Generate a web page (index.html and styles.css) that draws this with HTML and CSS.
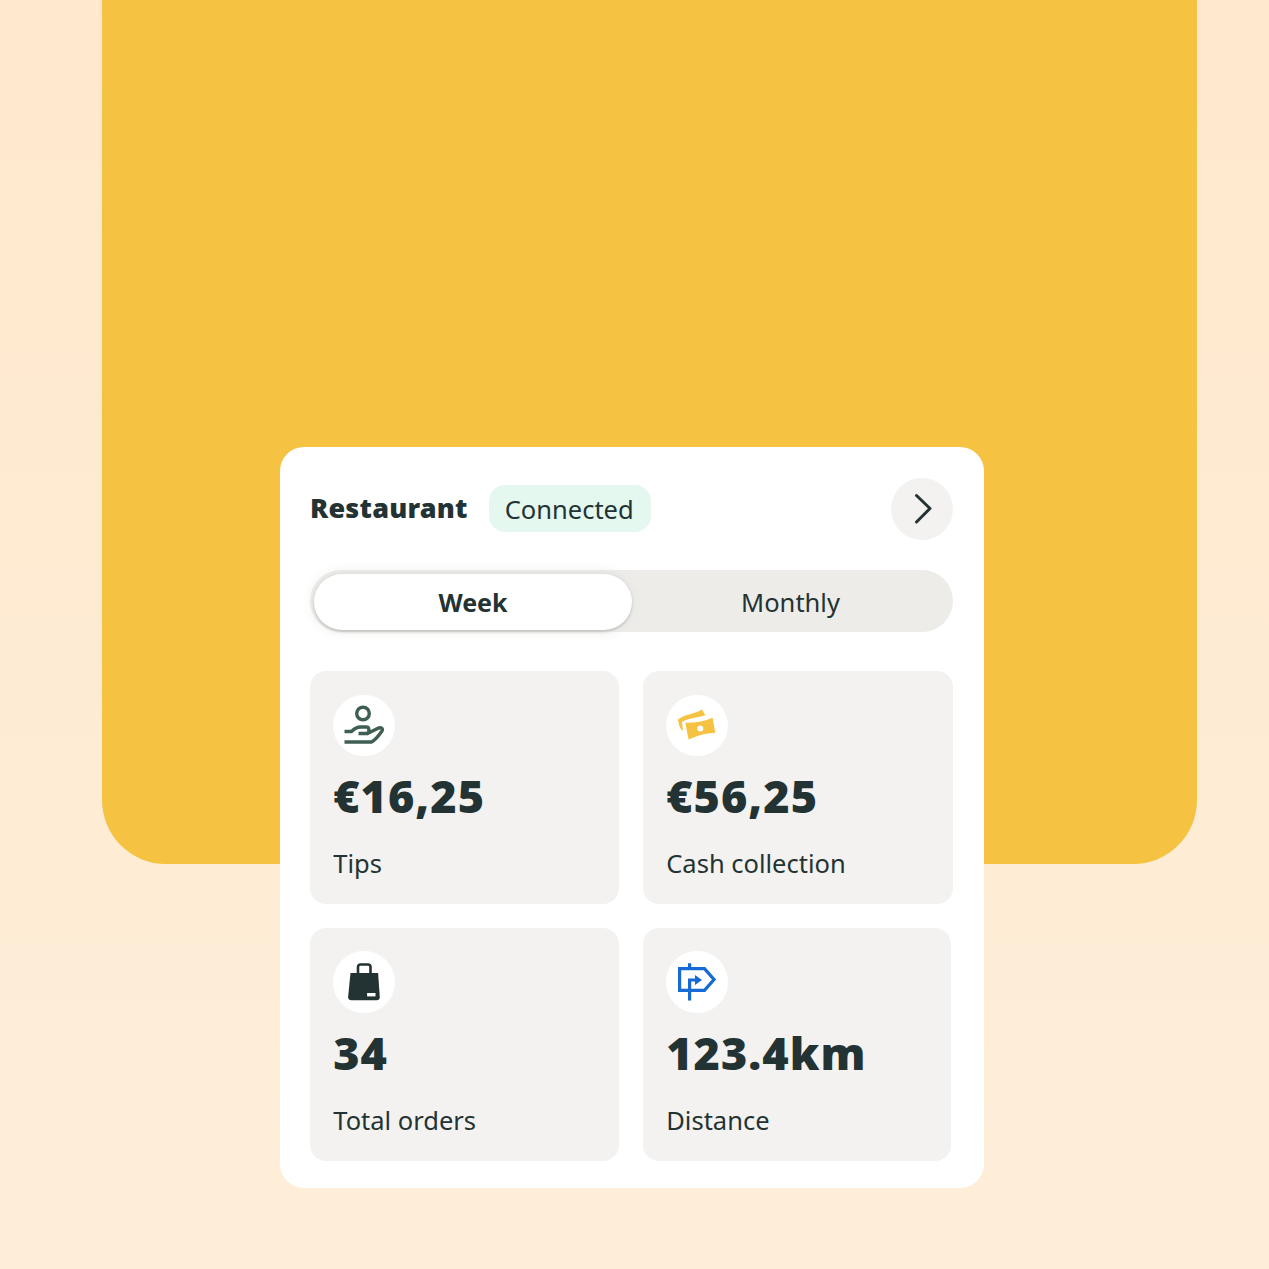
FILE: index.html
```html
<!DOCTYPE html>
<html>

<head>
    <title>Restaurant</title>
    <meta charset="UTF-8">
    <meta name="viewport" content="width=device-width, initial-scale=1.0">
    <link rel="stylesheet" href="styles.css">
</head>

<body>
    <div class="backdrop"></div>

    <div class="card">
        <div class="card-header">
            <h2>Restaurant</h2>
            <span class="badge">Connected</span>
            <div class="next-button">
                <svg width="24" height="32" viewBox="0 0 24 32">
                    <path d="M6.5 2.5L20 15.5L6.5 29" fill="none" stroke="#233333" stroke-width="3" stroke-linecap="round" stroke-linejoin="round" />
                </svg>
            </div>
        </div>

        <div class="toggle">
            <div class="toggle-option active">Week</div>
            <div class="toggle-option inactive">Monthly</div>
        </div>

        <div class="stats">
            <div class="stat">
                <div class="stat-icon">
                    <svg width="44" height="44" viewBox="0 0 44 44">
                        <circle cx="21" cy="10.5" r="6.3" fill="none" stroke="#3f5f52" stroke-width="3.4" />
                        <path d="M2.5 28.5H9.5C12.5 25.5 15.500 24 18.500 24H24.500C27.500 24 28 30 24.500 30.500H16.500M24.500 31L35.500 25.500C38.500 24 41.500 25 40 28C36.500 33 33.500 37 29.500 39H2.500" fill="none" stroke="#3f5f52" stroke-width="3.4" />
                    </svg>
                </div>
                <div class="stat-value">€16,25</div>
                <div class="stat-label">Tips</div>
            </div>
            <div class="stat">
                <div class="stat-icon">
                    <svg width="44" height="44" viewBox="0 0 44 44">
                        <path d="M3 16.5C10 11 20 11 27 6.5L30.3 12.2C22 15 14 14.5 7 19L8 28C5 26 3.5 22 3 16.5Z" fill="#f5c242" />
                        <path d="M10.3 19.8C19 20 28 19 37.6 14.8L40.3 29.8C31 30 22 33 13.6 36.5Z" fill="#f5c242" />
                        <circle cx="25.3" cy="25.5" r="3" fill="#fff" />
                    </svg>
                </div>
                <div class="stat-value">€56,25</div>
                <div class="stat-label">Cash collection</div>
            </div>
            <div class="stat">
                <div class="stat-icon">
                    <svg width="44" height="44" viewBox="0 0 44 44">
                        <path d="M16 14V7C16 5.500 17 4.500 18.500 4.500H26C27.500 4.500 28.500 5.500 28.500 7V14" fill="none" stroke="#233333" stroke-width="2.6" />
                        <path d="M8.500 13H36.100L37.800 37C37.800 39 36.800 40.300 34.500 40.300H9.500C7.200 40.300 6.100 39 6.100 37Z" fill="#233333" />
                        <rect x="25.100" y="33" width="8.400" height="3.400" fill="#fff" />
                    </svg>
                </div>
                <div class="stat-value">34</div>
                <div class="stat-label">Total orders</div>
            </div>
            <div class="stat stat-narrow">
                <div class="stat-icon">
                    <svg width="44" height="44" viewBox="0 0 44 44">
                        <path d="M4.600 8.600H29.500L39 19.500L29.500 30.400H4.600Z" fill="none" stroke="#1769d6" stroke-width="3.200" />
                        <path d="M14.600 3.300V8.600M14.600 40.500V20H21" fill="none" stroke="#1769d6" stroke-width="3.200" />
                        <path d="M20 15L27 20L20 25Z" fill="#1769d6" />
                    </svg>
                </div>
                <div class="stat-value">123.4km</div>
                <div class="stat-label">Distance</div>
            </div>
        </div>
    </div>
</body>

</html>
```

FILE: styles.css
```css
body {
    margin: 0;
    height: 1269px;
    overflow: hidden;
    font-family: "Noto Sans", Arial, sans-serif;
    color: #233333;
    background: linear-gradient(#ffe8cd, #feeed9);
}

.backdrop {
    height: 864px;
    width: 1095px;
    margin-left: 102px;
    border-radius: 0 0 64px 64px;
    background-color: #f5c242;
}

.card {
    box-sizing: border-box;
    width: 704px;
    height: 741px;
    margin: -417px 0 0 280px;
    padding: 31px 31px 31px 30px;
    border-radius: 24px;
    background-color: #fff;
}

.card-header {
    display: flex;
    align-items: center;
    height: 62px;
}

.card-header h2 {
    margin: 0 21px 3px 0;
    font-size: 27px;
    font-weight: 900;
    letter-spacing: .2px;
}

.badge {
    margin-top: -1px;
    padding: 8px 17px 7px 16px;
    border-radius: 16px;
    background-color: #e4f8f0;
    font-size: 25.5px;
    line-height: 32px;
}

.next-button {
    display: flex;
    justify-content: center;
    align-items: center;
    width: 62px;
    height: 62px;
    margin-left: auto;
    border-radius: 50%;
    background-color: #f3f2f0;
}

.toggle {
    display: flex;
    height: 62px;
    margin-top: 30px;
    border-radius: 31px;
    background-color: #edecE9;
}

.toggle-option {
    display: flex;
    justify-content: center;
    align-items: center;
    font-size: 25.5px;
}

.toggle-option.active {
    flex-shrink: 0;
    width: 318px;
    height: 56px;
    margin: 4px 0 0 4px;
    border-radius: 28px;
    background-color: #fff;
    font-size: 25px;
    font-weight: 700;
    box-shadow: 0 2px 2px #c9c8c5, 0 0 4px #d8d7d4, 0 0 14px #e6e5e2;
}

.toggle-option.inactive {
    flex: 1;
    padding: 2px 4px 0 0;
}

.stats {
    display: grid;
    grid-template-columns: 309px 310px;
    gap: 23.6px 24px;
    margin-top: 39px;
}

.stat {
    box-sizing: border-box;
    height: 233px;
    padding: 23.5px 23.25px;
    border-radius: 16px;
    background-color: #f3f2f0;
}

.stat-narrow {
    width: 308px;
}

.stat-icon {
    display: flex;
    justify-content: center;
    align-items: center;
    width: 61.5px;
    height: 61.5px;
    border-radius: 50%;
    background-color: #fff;
}

.stat-value {
    margin-top: 10px;
    font-size: 45px;
    font-weight: 900;
    line-height: 60px;
    letter-spacing: 1px;
}

.stat-label {
    margin-top: 20px;
    font-size: 25.5px;
    line-height: 34px;
}
```
